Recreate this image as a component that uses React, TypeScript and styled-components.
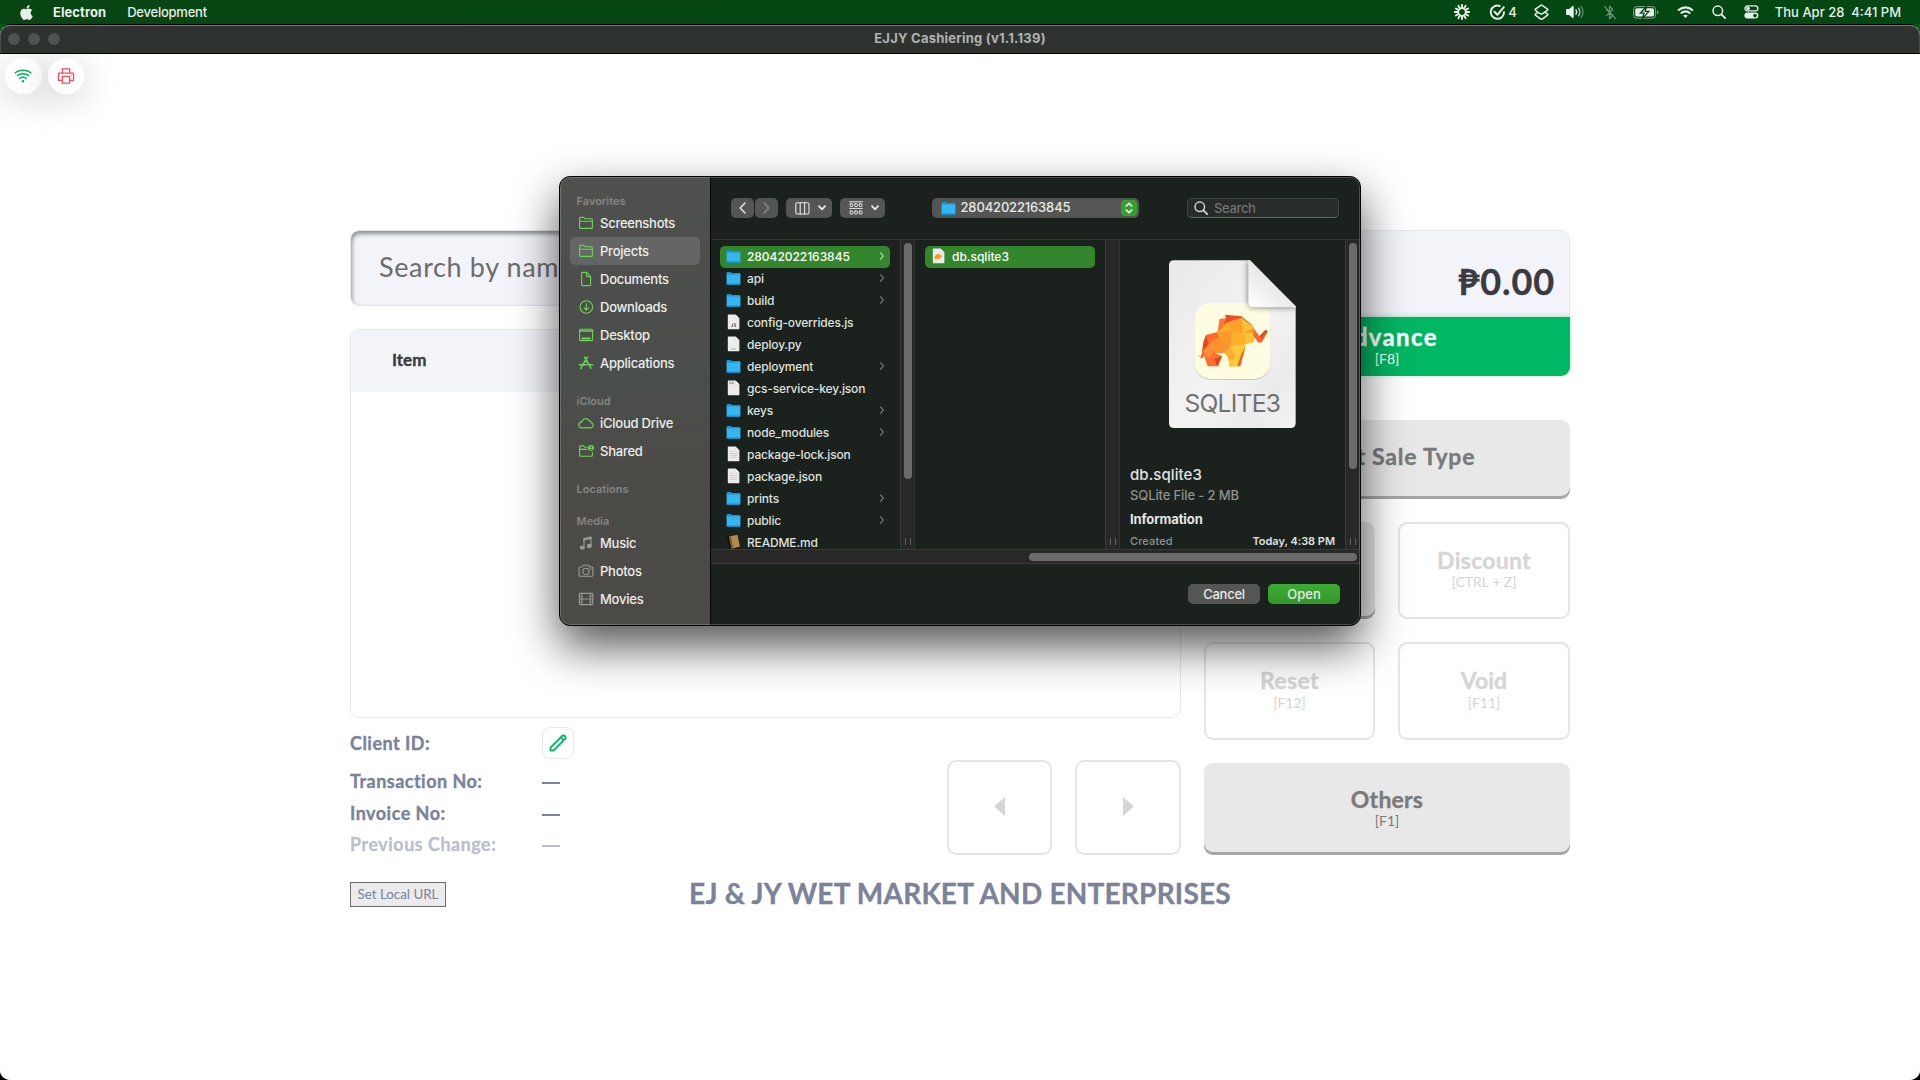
import React from "react";
import styled, { createGlobalStyle, css } from "styled-components";
import { FaApple } from "react-icons/fa";
import { AiOutlineWifi, AiOutlinePrinter } from "react-icons/ai";

const GlobalStyle = createGlobalStyle`
  * { box-sizing: border-box; }
  html, body { margin: 0; padding: 0; background: #000; }
  button { font: inherit; margin: 0; }
`;

const system = css`font-family: Inter, "Liberation Sans", sans-serif;`;
const rounded = css`font-family: Lato, "Open Sans", sans-serif;`;
const heavy = css`font-weight: 700; -webkit-text-stroke: 0.35px currentColor;`;

/* ---------- desktop shell ---------- */

const Desktop = styled.div`
  ${system}
  position: relative;
  width: 1920px;
  height: 1080px;
  overflow: hidden;
  display: flex;
  flex-direction: column;
  background: linear-gradient(#005c12 0, #005c12 60px, #000 61px);
`;

const MenuBar = styled.header`
  height: 24px;
  flex: none;
  display: flex;
  align-items: center;
  justify-content: space-between;
  padding: 0 19px 0 18px;
  background: linear-gradient(90deg, #084513, #034712 60%);
  color: #e8eee9;
  font-size: 13px;
`;

const MenuGroup = styled.div`
  display: flex;
  align-items: center;
  height: 23px;
`;

const MenuLabel = styled.span<{ $left: number; $bold?: boolean; $ls?: number }>`
  margin-left: ${p => p.$left}px;
  font-weight: ${p => (p.$bold ? 700 : 500)};
  letter-spacing: ${p => p.$ls ?? 0}px;
  white-space: pre;
`;

const StatusIcon = styled.span<{ $left: number; $dim?: boolean }>`
  display: flex;
  margin-left: ${p => p.$left}px;
  opacity: ${p => (p.$dim ? 0.45 : 1)};
`;

const Window = styled.main`
  flex: 1;
  min-height: 0;
  display: flex;
  flex-direction: column;
  border-top: 1px solid #000;
  border-radius: 10px;
  overflow: hidden;
  background: #fff;
`;

const TitleBar = styled.div`
  position: relative;
  height: 29px;
  flex: none;
  display: flex;
  align-items: center;
  gap: 8px;
  padding: 0 8px;
  background: #2f332f;
  border-bottom: 1px solid #000;
  box-shadow: inset 0 1px 0 #737673, inset 1px 0 0 #4c504c, inset -1px 0 0 #4c504c;
  border-radius: 10px 10px 0 0;
`;

const Light = styled.span`
  width: 12px;
  height: 12px;
  border-radius: 50%;
  background: #4e534f;
`;

const WindowTitle = styled.h1`
  flex: 1;
  margin: 0 60px 2px 0;
  text-align: center;
  font-size: 13px;
  font-weight: 700;
  letter-spacing: 0.24px;
  color: #b1b3b1;
`;

/* ---------- cashiering page ---------- */

const Page = styled.div`
  ${rounded}
  flex: 1;
  min-height: 0;
  display: flex;
  flex-direction: column;
  align-items: center;
  background: #fff;
`;

const Badges = styled.div`
  align-self: stretch;
  display: flex;
  gap: 6px;
  height: 176px;
  padding: 4px 5px;
`;

const Badge = styled.span<{ $color: string }>`
  display: flex;
  align-items: center;
  justify-content: center;
  width: 36.5px;
  height: 36px;
  border-radius: 50%;
  background: #fff;
  color: ${p => p.$color};
  box-shadow: 0 6px 38px rgba(0, 0, 0, 0.21);
`;

const Board = styled.div`
  width: 1220px;
  display: flex;
  justify-content: space-between;
`;

const LeftColumn = styled.section`
  width: 831px;
  display: flex;
  flex-direction: column;
`;

const SearchBox = styled.div`
  height: 76px;
  display: flex;
  align-items: center;
  padding: 0 28px 4px;
  border: 1px solid #e4e5e9;
  border-radius: 9px;
  background: #f3f4f9;
  box-shadow: inset 1px 3px 4px rgba(0, 0, 0, 0.42);
  font-size: 27px;
  letter-spacing: 0.63px;
  color: #6c6c6c;
`;

const ItemTable = styled.div`
  height: 389px;
  margin-top: 23px;
  border: 1px solid #e8e8e8;
  border-radius: 9px;
  overflow: hidden;
`;

const TableHead = styled.div`
  height: 62px;
  display: flex;
  align-items: center;
  padding: 0 41px 3px;
  background: #f3f4f9;
  font-size: 17px;
  ${heavy}
  color: #3a3a40;
`;

const Summary = styled.div`
  display: flex;
  justify-content: space-between;
  height: 141px;
`;

const Details = styled.div`
  padding-top: 9px;
  font-size: 18px;
  color: #7b8299;
`;

const DetailRow = styled.div<{ $height: number; $after?: number; $faded?: boolean }>`
  display: flex;
  align-items: center;
  height: ${p => p.$height}px;
  margin-bottom: ${p => p.$after ?? 0}px;
  opacity: ${p => (p.$faded ? 0.5 : 1)};
`;

const DetailLabel = styled.span`
  width: 192px;
  ${heavy}
  letter-spacing: 0.48px;
`;

const Dash = styled.span`
  width: 18px;
  height: 2px;
  margin-top: 4px;
  background: currentColor;
`;

const EditButton = styled.button`
  display: flex;
  align-items: center;
  justify-content: center;
  width: 32px;
  height: 32px;
  padding: 0 1px 0 0;
  border: 1px solid #e8e8e8;
  border-radius: 8px;
  background: #fff;
  color: #00b763;
`;

const Pager = styled.div`
  display: flex;
  gap: 23px;
  padding-top: 42px;
`;

const PagerButton = styled.button<{ $width: number }>`
  display: flex;
  align-items: center;
  justify-content: center;
  width: ${p => p.$width}px;
  height: 95px;
  padding: 0 0 2px;
  border: 2px solid #e5e5e5;
  border-radius: 9px;
  background: #fff;
  color: #d5d5d5;
`;

const RightColumn = styled.section`
  width: 366px;
  display: flex;
  flex-direction: column;
`;

const Total = styled.div`
  height: 87px;
  display: flex;
  align-items: center;
  justify-content: flex-end;
  padding: 13px 14px 0;
  border: 1px solid #e8e8e8;
  border-bottom: 0;
  border-radius: 9px 9px 0 0;
  background: #f3f4f9;
  font-size: 36px;
  ${heavy}
  letter-spacing: 0.9px;
  color: #3a3a40;
`;

const KeyGrid = styled.div`
  display: grid;
  grid-template-columns: 171px 1fr;
  gap: 23px;
  margin: 23px 0;
`;

type Look = "advance" | "solid" | "outline";
const looks = {
  advance: css`
    background: #00b763; color: #fff; border-radius: 0 0 9px 9px;
    box-shadow: 0 -1px 5px rgba(0, 183, 99, 0.3);
  `,
  solid: css`
    background: #e8e8e8; color: #7a7a7a; border-radius: 9px;
    box-shadow: inset 0 -3px 0 #a6a6a6;
  `,
  outline: css`background: #fff; color: #d5d5d5; border-radius: 9px; border: 2px solid #e5e5e5;`,
};

const KeyButton = styled.button<{ $look: Look; $height: number; $top?: number; $lift?: number }>`
  display: flex;
  flex-direction: column;
  align-items: center;
  justify-content: center;
  width: 100%;
  height: ${p => p.$height}px;
  margin-top: ${p => p.$top ?? 0}px;
  padding: 0 0 ${p => p.$lift ?? 0}px;
  border: 0;
  ${p => looks[p.$look]}
`;

const KeyTitle = styled.span<{ $size?: number; $ls?: number }>`
  font-size: ${p => p.$size ?? 23}px;
  line-height: 26px;
  ${heavy}
  letter-spacing: ${p => p.$ls ?? 0.4}px;
`;

const KeyHint = styled.span<{ $gap?: number }>`
  margin-top: ${p => p.$gap ?? 0}px;
  font-size: 14px;
  line-height: 17px;
`;

const Footer = styled.footer`
  width: 1220px;
  display: grid;
  grid-template-columns: 1fr auto 1fr;
  align-items: start;
  padding-top: 23px;
`;

const LocalUrl = styled.button`
  justify-self: start;
  width: 96px;
  height: 25px;
  padding: 0 0 2px;
  border: 1px solid #6b6b6b;
  background: #ebebeb;
  color: #7b8299;
  font-size: 13.33px;
  line-height: 20px;
`;

const Company = styled.h2`
  margin: -1px 0 0;
  font-size: 28px;
  line-height: 24px;
  ${heavy}
  letter-spacing: 0.22px;
  color: #7b8299;
`;

/* ---------- open-file dialog ---------- */

const Dialog = styled.div`
  position: absolute;
  left: 559px;
  top: 176px;
  width: 802px;
  height: 450px;
  display: flex;
  border: 1px solid #050505;
  border-radius: 11px;
  overflow: hidden;
  background: #1b211d;
  box-shadow: 0 20px 46px rgba(0, 0, 0, 0.68);
  &::after {
    content: "";
    position: absolute;
    inset: 0;
    border: 1px solid rgba(255, 255, 255, 0.2);
    border-radius: 10px;
    pointer-events: none;
  }
`;

const Sidebar = styled.aside`
  width: 151px;
  flex: none;
  padding: 0 10px;
  border-right: 1px solid #000;
  background: linear-gradient(#50514e, #4c4e4c 30%, #4a4e4b 48%, #4d4b47 65%, #4c4a46);
`;

const SideHeading = styled.h3`
  margin: 15px 0 0;
  padding: 1px 0 0 6.5px;
  height: 17px;
  line-height: 17px;
  font-size: 11px;
  font-weight: 600;
  color: #848684;
`;

const SideItem = styled.div<{ $active?: boolean; $muted?: boolean }>`
  display: flex;
  align-items: center;
  height: 28px;
  padding-left: 8px;
  border-radius: 5px;
  background: ${p => (p.$active ? "#636664" : "transparent")};
  color: #eceeec;
  font-size: 13px;
  font-weight: 500;
  letter-spacing: -0.24px;
  white-space: nowrap;
  svg { width: 16px; height: 16px; margin-right: 6px; flex: none; color: ${p => (p.$muted ? "#9a9b99" : "#6fd456")}; }
`;

const Browser = styled.section`
  flex: 1;
  min-width: 0;
  display: flex;
  flex-direction: column;
`;

const Toolbar = styled.div`
  height: 63px;
  flex: none;
  display: flex;
  align-items: flex-start;
  padding: 21px 21px 0 20px;
  border-bottom: 1px solid #343936;
`;

const ToolButton = styled.button<{ $width: number; $left?: number; $dim?: boolean }>`
  display: flex;
  align-items: center;
  justify-content: center;
  width: ${p => p.$width}px;
  height: 20px;
  margin-left: ${p => p.$left ?? 0}px;
  padding: 0;
  gap: 8px;
  border: 0;
  border-radius: 5px;
  background: #535653;
  color: ${p => (p.$dim ? "#868986" : "#e6e8e6")};
`;

const ViewButton = styled(ToolButton)`
  padding-left: 3px;
`;

const PathPicker = styled.div`
  display: flex;
  align-items: center;
  width: 207px;
  height: 20px;
  margin-left: 47px;
  padding: 0 1px 0 9px;
  border-radius: 5px;
  background: #535653;
  color: #e6e8e6;
  font-size: 13px;
  font-weight: 500;
  letter-spacing: -0.15px;
  span { flex: 1; margin: -2px 0 0 4.5px; }
`;

const Stepper = styled.i`
  display: flex;
  align-items: center;
  justify-content: center;
  width: 16px;
  height: 16px;
  margin-right: 1px;
  border-radius: 4px;
  background: #36a02f;
  color: #fff;
`;

const SearchField = styled.div`
  display: flex;
  align-items: center;
  width: 152px;
  height: 20px;
  margin-left: auto;
  padding-left: 6px;
  gap: 6px;
  border: 1px solid #404542;
  border-bottom-color: #646864;
  border-radius: 5px;
  background: #272c29;
  color: #717471;
  font-size: 13px;
  font-weight: 500;
  letter-spacing: -0.35px;
  svg { color: #d0d2d0; }
`;

const Columns = styled.div`
  display: flex;
  height: 309px;
  overflow: hidden;
`;

const FileColumn = styled.div<{ $width: number; $inset: number }>`
  width: ${p => p.$width}px;
  flex: none;
  padding: 6px 0 0 ${p => p.$inset}px;
`;

const FileRow = styled.div<{ $active?: boolean; $ls?: number }>`
  display: flex;
  align-items: center;
  width: 170px;
  height: 22px;
  padding: 0 6px 2px;
  border-radius: 5px;
  background: ${p => (p.$active ? "#33862b" : "transparent")};
  color: ${p => (p.$active ? "#fff" : "#dfe1df")};
  font-size: 12px;
  font-weight: 500;
  letter-spacing: ${p => p.$ls ?? -0.16}px;
  white-space: nowrap;
  span { flex: 1; margin-left: 6px; }
`;

const Chevron = styled.svg<{ $bright?: boolean }>`
  width: 4px;
  height: 8px;
  color: ${p => (p.$bright ? "#cfe3cd" : "#868986")};
`;

const Track = styled.div`
  width: 15px;
  flex: none;
  display: flex;
  flex-direction: column;
  align-items: center;
  justify-content: space-between;
  padding: 3px 0 4px;
  border-left: 1px solid #3a3c3a;
  border-right: 1px solid #303330;
  background: #272827;
`;

const Thumb = styled.div<{ $height: number }>`
  width: 8px;
  height: ${p => p.$height}px;
  border-radius: 4px;
  background: #6b6b6b;
`;

const Grip = styled.div`
  width: 6px;
  height: 7px;
  border: solid #5e605e;
  border-width: 0 1px;
`;

const BottomTrack = styled.div`
  height: 15px;
  flex: none;
  display: flex;
  justify-content: flex-end;
  align-items: center;
  padding-right: 3px;
  border-top: 1px solid #3a3c3a;
  border-bottom: 1px solid #3a3c3a;
  background: #272827;
`;

const BottomThumb = styled.div`
  width: 328px;
  height: 8px;
  border-radius: 4px;
  background: #6b6b6b;
`;

const Preview = styled.div`
  width: 225px;
  flex: none;
  display: flex;
  flex-direction: column;
  padding: 18px 10px 0;
`;

const DocumentArt = styled.svg`
  width: 131px;
  height: 172px;
  margin-left: 37px;
  flex: none;
`;

const PreviewName = styled.div`
  margin-top: 35px;
  line-height: 20px;
  height: 21px;
  font-size: 15px;
  font-weight: 500;
  letter-spacing: 0.08px;
  color: #e1e3e1;
`;

const PreviewKind = styled.div`
  height: 24px;
  flex: none;
  line-height: 20px;
  font-size: 13px;
  font-weight: 500;
  letter-spacing: -0.12px;
  color: #8f928f;
`;

const PreviewHeading = styled.div`
  height: 20px;
  flex: none;
  line-height: 20px;
  font-size: 13px;
  font-weight: 700;
  letter-spacing: -0.1px;
  color: #e4e6e4;
`;

const PreviewFact = styled.div`
  flex: none;
  display: flex;
  justify-content: space-between;
  margin-top: 2px;
  line-height: 20px;
  font-size: 11px;
  font-weight: 500;
  color: #8f928f;
  letter-spacing: 0.12px;
  b { font-weight: 600; letter-spacing: -0.04px; color: #dfe1df; }
`;

const Actions = styled.div`
  display: flex;
  justify-content: flex-end;
  gap: 8px;
  padding: 20px 20px 0 0;
`;

const ActionButton = styled.button<{ $primary?: boolean }>`
  width: 72px;
  height: 20px;
  padding: 0;
  border: 0;
  border-radius: 5px;
  background: ${p => (p.$primary ? "linear-gradient(#3dab34, #329929)" : "#535653")};
  color: #e8eae8;
  font-size: 13px;
  line-height: 20px;
  font-weight: 500;
  letter-spacing: ${p => (p.$primary ? 0 : -0.25)}px;
`;

/* ---------- small drawings ---------- */

const line = { fill: "none", stroke: "currentColor", strokeWidth: 1.1, strokeLinecap: "round", strokeLinejoin: "round" } as const;

const sideIcons: Record<string, React.ReactNode> = {
  folder: <path d="M1.6 12.4V3.4q0-1 1-1h3l1.3 1.3h6.5q1 0 1 1v7.7q0 1-1 1H2.6q-1 0-1-1zM1.6 6.3h12.8" />,
  doc: <path d="M3.6 2.4q0-1 1-1h4l4 4.2v8q0 1-1 1h-7q-1 0-1-1zM8.4 1.6v3.2q0 .9.9.9h3.2" />,
  down: <><circle cx="8.3" cy="8" r="6.3" /><path d="M8.3 4.8v6M6 8.8l2.3 2.3 2.3-2.3" /></>,
  desktop: <><rect x="1.6" y="2.2" width="13" height="11.4" rx="1" /><path d="M1.6 4h13" strokeWidth="1.6" /><path d="M4.4 11.4h7.4" strokeWidth="2" /></>,
  apps: <path strokeWidth="1.6" d="M6.6 2.2L12.9 13.2M9.4 2.2L4 11.2M3.2 12.6l-.5.9M1.6 9.8h7.2M11.4 9.8h3.2" />,
  cloud: <path d="M4 12.9h8.6a2.7 2.7 0 0 0 .6-5.3 2.3 2.3 0 0 0-2.2-2A3.9 3.9 0 0 0 3.8 6.9 3 3 0 0 0 4 12.9z" />,
  shared: <><path d="M9 4.2H6.9L5.6 2.9H2.6q-1 0-1 1v8.3q0 1 1 1h10.8q1 0 1-1V9.6M1.6 6.4H9" /><circle cx="13" cy="5" r="3" fill="currentColor" stroke="none" /><circle cx="13" cy="4.1" r=".9" fill="#4c4d4a" stroke="none" /><path d="M11.6 6.7q1.4-1.2 2.8 0" stroke="#4c4d4a" strokeWidth="1" /></>,
  music: <><path d="M6 12V3.6l7-1.6v8.4" /><path d="M6 4.6l7-1.6" strokeWidth="2" /><ellipse cx="4.3" cy="12.6" rx="2" ry="1.6" fill="currentColor" /><ellipse cx="11.3" cy="11" rx="2" ry="1.6" fill="currentColor" /></>,
  photo: <><path d="M2 13.2q-.9 0-.9-1V5q0-1 .9-1h2.2l1.2-1.7h5.2L11.8 4H14q.9 0 .9 1v7.2q0 1-.9 1z" /><circle cx="8" cy="8.4" r="3.1" /><path d="M12.6 5.9h.4" /></>,
  film: <><rect x="1.4" y="2.4" width="13.4" height="11.2" rx=".8" /><path d="M4 2.4v11.2M12.2 2.4v11.2M4 8h8.2M1.4 5.2H4M1.4 8H4M1.4 10.8H4M12.2 5.2h2.6M12.2 8h2.6M12.2 10.8h2.6" strokeWidth=".9" /></>,
};

const SideIcon = ({ name }: { name: string }) => <svg viewBox="0 0 16 16" {...line}>{sideIcons[name]}</svg>;

const FolderIcon = () => (
  <svg width="15" height="15" viewBox="0 0 15 15">
    <path d="M.6 1.8q0-.8.8-.8h3.4l1.1 1h7.6q.9 0 .9.8V5H.6z" fill="#1a93d2" />
    <path d="M.6 3.6h13.8v9.3q0 .9-.8.9H1.4q-.8 0-.8-.9z" fill="#35b5f1" />
    <path d="M.6 12.4h13.8v.6q0 .8-.8.8H1.4q-.8 0-.8-.8z" fill="#118ccb" />
  </svg>
);

const FileIcon = ({ kind }: { kind: string }) => (
  <svg width="15" height="16" viewBox="0 0 15 16">
    {kind === "book" ? (
      <><path d="M.8 2.6L3.4 2l2.4 11.6-2 1.2z" fill="#17110a" /><path d="M3 2.4L11.4.8 14 12.4l-8.3 2.4z" fill="#b48a4f" /><path d="M3 2.4l1.8-.4 2.6 12.2-1.7.6z" fill="#7d5a2c" /></>
    ) : (
      <>
        <path d="M1.8 1.2q0-.6.6-.6h7l4 4v10q0 .7-.6.7H2.4q-.6 0-.6-.7z" fill="#ececec" />
        <path d="M9.4.6l4 4h-4z" fill="#fff" stroke="#bbb" strokeWidth=".4" />
        {kind === "js" && <path d="M6.6 9.6v2.4q0 .8-1.4.6M10 9.9q-2-.5-1.8.6 0 .5 1 .7t.9.8q-.3.8-2 .3" fill="none" stroke="#555" strokeWidth=".9" />}
        {kind === "text" && <path d="M3.6 5.4h4M3.6 7.4h8M3.6 9.4h8M3.6 11.4h8" stroke="#c4c4c4" strokeWidth=".7" />}
        {kind === "py" && <path d="M5 13h5" stroke="#aaa" strokeWidth=".9" />}
        {kind === "key" && <path d="M3 2.2h5M3 3.6h5" stroke="#999" strokeWidth=".8" />}
        {kind === "db" && <path d="M3.6 11V8.4L6 6l3 .2 1 1.6 1.8-.5-1.2 2L9 9.6 8.6 11H7l-.6-1L5.8 11z" fill="#f9962c" />}
      </>
    )}
  </svg>
);

const Down = () => <svg width="8" height="6" viewBox="0 0 8 6" {...line} strokeWidth={1.8}><path d="M1 1.2l3 3.2 3-3.2" /></svg>;

const shade = (points: string, fill: string) => <polygon points={points} fill={fill} />;

const SqliteDocument = () => (
  <DocumentArt viewBox="323 263 393 516">
    <defs>
      <linearGradient id="paper" x1="0" y1="0" x2="1" y2="1"><stop offset="0" stopColor="#e9e9ea" /><stop offset=".55" stopColor="#f3f3f4" /><stop offset=".8" stopColor="#ebebec" /><stop offset="1" stopColor="#f2f2f3" /></linearGradient>
      <linearGradient id="curl" x1="0" y1="1" x2=".55" y2=".4"><stop offset="0" stopColor="#fff" /><stop offset="1" stopColor="#e6e6e7" /></linearGradient>
      <clipPath id="sheet"><path d="M329 285q0-15 15-15h228l137 138v350q0 15-15 15H344q-15 0-15-15z" /></clipPath>
      <filter id="soft" x="-30%" y="-30%" width="160%" height="160%"><feGaussianBlur stdDeviation="9" /></filter>
    </defs>
    <path d="M329 285q0-15 15-15h228l137 138v350q0 15-15 15H344q-15 0-15-15z" fill="url(#paper)" />
    <g clipPath="url(#sheet)">
      <rect x="405" y="401" width="228" height="228" rx="50" fill="#c9c9bb" />
      <rect x="405" y="398" width="228" height="228" rx="50" fill="#fefde1" />
      {shade("413,553 424,560 430,543 438,548 428,565", "#f1592a")}
      {shade("440,494 474,485 486,478 484,512 456,522 428,548", "#fb6a2e")}
      {shade("440,494 448,520 428,548 432,515", "#e9481f")}
      {shade("428,546 456,514 480,500 514,528 497,548 464,548", "#fc922f")}
      {shade("430,545 464,546 488,558 477,588 445,588", "#ff6d31")}
      {shade("466,566 488,557 473,588", "#df431d")}
      {shade("430,545 464,546 450,566", "#ff8a3d")}
      {shade("482,482 481,446 500,444 497,433 546,438 585,470 546,448 505,458", "#ec4d24")}
      {shade("481,446 500,446 490,474 474,487", "#ff7632")}
      {shade("474,487 500,458 546,442 584,472 584,515 560,521 514,531 480,502", "#fcb02b")}
      {shade("500,458 546,442 552,488 520,480", "#faa129")}
      {shade("546,442 584,472 584,515 560,519 552,488", "#ffc136")}
      {shade("552,488 584,473 584,487", "#f79a28")}
      {shade("474,487 520,480 514,531 480,502", "#fb9a2c")}
      {shade("583,474 600,498 619,478 625,484 608,515 597,517 582,497", "#f8672b")}
      {shade("600,498 619,478 625,484 606,506", "#e24a20")}
      {shade("497,548 514,531 560,520 553,548 540,588 510,590 506,560", "#ffc73a")}
      {shade("497,548 514,531 530,560 512,572", "#fdad2d")}
      {shade("558,528 553,550 543,588 534,588 546,552", "#f0601f")}
      <path d="M567 262v132q0 17 17 17h132z" fill="#000" opacity=".55" filter="url(#soft)" />
    </g>
    <path d="M567 270h5l137 138v3H582q-15 0-15-15z" fill="url(#curl)" />
    <text x="519" y="726" textAnchor="middle" fontFamily="Inter, Liberation Sans, sans-serif" fontSize="74" letterSpacing="-2.4" fill="#707070">SQLITE3</text>
  </DocumentArt>
);

const spokes = Array.from({ length: 12 }, (_, i) => i * 30);

const BurstIcon = () => (
  <svg width="16" height="16" viewBox="0 0 16 16" stroke="currentColor" strokeWidth="1.9" strokeLinecap="round">
    {spokes.map(a => <path key={a} d="M8 .9v3.4" transform={`rotate(${a} 8 8)`} />)}
    <circle cx="8" cy="8" r="4" fill="none" strokeWidth="1.4" />
  </svg>
);
const CheckIcon = () => <svg width="17" height="17" viewBox="0 0 17 17" {...line} strokeWidth={2}><path d="M10.6 2A6.6 6.6 0 1 0 15 8.2" /><path d="M5.4 7.8l3 3 6.4-7.6" /></svg>;
const LayersIcon = () => <svg width="15" height="17" viewBox="0 0 15 17" {...line} strokeWidth={1.5}><path d="M3.8 8.3L1.4 6.1q-.5-.5 0-1L6.8 1.3q.7-.4 1.4 0l5.4 3.8q.5.5 0 1L8.2 9.8q-.7.4-1.4 0zM3.6 8.5l-2.2 1.6q-.5.5 0 1l5.4 4q.7.4 1.4 0l5.4-4q.5-.5 0-1l-2.2-1.6" /></svg>;
const SpeakerIcon = () => <svg width="19" height="14" viewBox="0 0 19 14" {...line} strokeWidth={1.4}><path d="M.8 4.8h2.5L7 1.6v10.8L3.3 9.2H.8z" fill="currentColor" /><path d="M10 4.8q1.4 2.2 0 4.4" /><path d="M12.6 3.2q2.5 3.8 0 7.6" opacity=".75" /><path d="M15.2 1.6q3.6 5.4 0 10.8" opacity=".4" /></svg>;
const BluetoothIcon = () => <svg width="12" height="15" viewBox="0 0 12 15" {...line} strokeWidth={1.3}><path d="M2.4 10.6L8.8 4.6 5.6 1.2v12.4l3.2-3-6.4-6" /><path d="M.8 1.6l10.6 12" /></svg>;
const BatteryIcon = () => (
  <svg width="26" height="13" viewBox="0 0 26 13">
    <rect x=".6" y=".6" width="22" height="11.6" rx="3.2" fill="none" stroke="currentColor" strokeOpacity=".55" strokeWidth="1" />
    <rect x="2.2" y="2.2" width="18.8" height="8.4" rx="1.8" fill="currentColor" />
    <path d="M24 4.6q1.5.6 1.5 1.8T24 8.2z" fill="currentColor" opacity=".55" />
    <path d="M13.6.2L7.4 7.2h3.6L9.4 12.6l6.4-7.2h-3.6z" fill="currentColor" stroke="#034712" strokeWidth="1.3" />
  </svg>
);
const WifiIcon = () => <svg width="17" height="13" viewBox="0 0 17 13" {...line} strokeWidth={2} strokeLinecap="butt"><path d="M1 4.6q7.5-6.4 15 0M3.7 7.4q4.8-4 9.6 0" /><path d="M6.1 9.6q2.4-1.8 4.8 0L8.5 12z" fill="currentColor" stroke="none" /></svg>;
const SearchIcon = ({ size = 14 }: { size?: number }) => <svg width={size} height={size} viewBox="0 0 14 14" {...line} strokeWidth={1.5}><circle cx="5.8" cy="5.8" r="4.8" /><path d="M9.4 9.4l3.8 3.8" strokeWidth="1.8" /></svg>;
const ControlIcon = () => (
  <svg width="15" height="14" viewBox="0 0 15 14">
    <rect x="1" y=".9" width="12.8" height="5" rx="2.5" fill="none" stroke="currentColor" strokeWidth="1.3" />
    <circle cx="4" cy="3.4" r="1.8" fill="currentColor" />
    <rect x=".4" y="7.6" width="14" height="6" rx="3" fill="currentColor" />
    <circle cx="11" cy="10.6" r="1.8" fill="#034712" />
  </svg>
);

/* ---------- data ---------- */

const sections = [
  { title: "Favorites", items: [["Screenshots", "folder"], ["Projects", "folder"], ["Documents", "doc"], ["Downloads", "down"], ["Desktop", "desktop"], ["Applications", "apps"]] },
  { title: "iCloud", items: [["iCloud Drive", "cloud"], ["Shared", "shared"]] },
  { title: "Locations", items: [] },
  { title: "Media", muted: true, items: [["Music", "music"], ["Photos", "photo"], ["Movies", "film"]] },
];

const files: [string, string][] = [
  ["28042022163845", "folder"], ["api", "folder"], ["build", "folder"], ["config-overrides.js", "js"], ["deploy.py", "py"],
  ["deployment", "folder"], ["gcs-service-key.json", "key"], ["keys", "folder"], ["node_modules", "folder"],
  ["package-lock.json", "text"], ["package.json", "text"], ["prints", "folder"], ["public", "folder"], ["README.md", "book"],
];

const FileDialog = () => (
  <Dialog role="dialog">
    <Sidebar>
      {sections.map(s => (
        <React.Fragment key={s.title}>
          <SideHeading>{s.title}</SideHeading>
          {s.items.map(([label, icon]) => (
            <SideItem key={label} $active={label === "Projects"} $muted={s.muted}><SideIcon name={icon} />{label}</SideItem>
          ))}
        </React.Fragment>
      ))}
    </Sidebar>
    <Browser>
      <Toolbar>
        <ToolButton $width={23}><svg width="7" height="12" viewBox="0 0 7 12" {...line} strokeWidth={1.4}><path d="M6 1L1.2 6 6 11" /></svg></ToolButton>
        <ToolButton $width={23} $left={1} $dim><svg width="7" height="12" viewBox="0 0 7 12" {...line} strokeWidth={1.4}><path d="M1 1l4.8 5L1 11" /></svg></ToolButton>
        <ViewButton $width={46} $left={8}>
          <svg width="15" height="13" viewBox="0 0 15 13" {...line}><rect x=".8" y=".8" width="13.2" height="11.2" rx="1.4" /><path d="M5.2 1v11M9.6 1v11" /></svg>
          <Down />
        </ViewButton>
        <ViewButton $width={45} $left={8}>
          <svg width="14" height="14" viewBox="0 0 14 14" {...line} strokeWidth={1}>
            <path d="M.6.8h12.8M.6 7.4h12.8" />
            {[1, 5.6, 10.2].map(x => <React.Fragment key={x}><rect x={x} y="2.8" width="2.8" height="2.6" rx=".6" /><rect x={x} y="10" width="2.8" height="3" rx=".6" /></React.Fragment>)}
          </svg>
          <Down />
        </ViewButton>
        <PathPicker>
          <FolderIcon /><span>28042022163845</span>
          <Stepper><svg width="8" height="12" viewBox="0 0 8 12" {...line} strokeWidth={1.6}><path d="M1.2 4L4 1.4 6.8 4M1.2 8L4 10.6 6.8 8" /></svg></Stepper>
        </PathPicker>
        <SearchField><SearchIcon />Search</SearchField>
      </Toolbar>
      <Columns>
        <FileColumn $width={189} $inset={9}>
          {files.map(([name, kind], i) => (
            <FileRow key={name} $active={i === 0} $ls={i === 0 ? -0.04 : undefined}>
              {kind === "folder" ? <FolderIcon /> : <FileIcon kind={kind} />}
              <span>{name}</span>
              {kind === "folder" && <Chevron $bright={i === 0} viewBox="0 0 4 8" {...line}><path d="M.6.8L3.4 4 .6 7.2" /></Chevron>}
            </FileRow>
          ))}
        </FileColumn>
        <Track><Thumb $height={236} /><Grip /></Track>
        <FileColumn $width={190} $inset={10}>
          <FileRow $active $ls={0}><FileIcon kind="db" /><span>db.sqlite3</span></FileRow>
        </FileColumn>
        <Track><span /><Grip /></Track>
        <Preview>
          <SqliteDocument />
          <PreviewName>db.sqlite3</PreviewName>
          <PreviewKind>SQLite File - 2 MB</PreviewKind>
          <PreviewHeading>Information</PreviewHeading>
          <PreviewFact>Created<b>Today, 4:38 PM</b></PreviewFact>
        </Preview>
        <Track><Thumb $height={226} /><Grip /></Track>
      </Columns>
      <BottomTrack><BottomThumb /></BottomTrack>
      <Actions><ActionButton>Cancel</ActionButton><ActionButton $primary>Open</ActionButton></Actions>
    </Browser>
  </Dialog>
);

export default function App() {
  return (
    <Desktop>
      <GlobalStyle />
      <MenuBar>
        <MenuGroup>
          <FaApple size={17} />
          <MenuLabel $left={18} $bold $ls={0.07}>Electron</MenuLabel>
          <MenuLabel $left={21} $ls={-0.23}>Development</MenuLabel>
        </MenuGroup>
        <MenuGroup>
          <StatusIcon $left={0}><BurstIcon /></StatusIcon>
          <StatusIcon $left={19}><CheckIcon /></StatusIcon>
          <MenuLabel $left={2}>4</MenuLabel>
          <StatusIcon $left={17}><LayersIcon /></StatusIcon>
          <StatusIcon $left={17}><SpeakerIcon /></StatusIcon>
          <StatusIcon $left={19} $dim><BluetoothIcon /></StatusIcon>
          <StatusIcon $left={17}><BatteryIcon /></StatusIcon>
          <StatusIcon $left={18}><WifiIcon /></StatusIcon>
          <StatusIcon $left={18}><SearchIcon /></StatusIcon>
          <StatusIcon $left={18}><ControlIcon /></StatusIcon>
          <MenuLabel $left={16}>Thu Apr 28  4:41 PM</MenuLabel>
        </MenuGroup>
      </MenuBar>
      <Window>
        <TitleBar><Light /><Light /><Light /><WindowTitle>EJJY Cashiering (v1.1.139)</WindowTitle></TitleBar>
        <Page>
          <Badges>
            <Badge $color="#00b763"><AiOutlineWifi size={20} /></Badge>
            <Badge $color="#ff4757"><AiOutlinePrinter size={20} /></Badge>
          </Badges>
          <Board>
            <LeftColumn>
              <SearchBox>Search by name</SearchBox>
              <ItemTable><TableHead>Item</TableHead></ItemTable>
              <Summary>
                <Details>
                  <DetailRow $height={32} $after={6}>
                    <DetailLabel>Client ID:</DetailLabel>
                    <EditButton>
                      <svg width="20" height="20" viewBox="0 0 24 24" {...line} strokeWidth={2.2}><path d="M15.232 5.232l3.536 3.536m-2.036-5.036a2.5 2.5 0 113.536 3.536L6.5 21.036H3v-3.572L16.732 3.732z" /></svg>
                    </EditButton>
                  </DetailRow>
                  <DetailRow $height={32}><DetailLabel>Transaction No:</DetailLabel><Dash /></DetailRow>
                  <DetailRow $height={32}><DetailLabel>Invoice No:</DetailLabel><Dash /></DetailRow>
                  <DetailRow $height={30} $faded><DetailLabel>Previous Change:</DetailLabel><Dash /></DetailRow>
                </Details>
                <Pager>
                  <PagerButton $width={105}><svg width="11" height="19" viewBox="0 0 11 19" fill="currentColor"><path d="M11 0v19L0 9.5z" /></svg></PagerButton>
                  <PagerButton $width={106}><svg width="11" height="19" viewBox="0 0 11 19" fill="currentColor"><path d="M0 0v19l11-9.5z" /></svg></PagerButton>
                </Pager>
              </Summary>
            </LeftColumn>
            <RightColumn>
              <Total>₱0.00</Total>
              <KeyButton $look="advance" $height={59} $lift={3}><KeyTitle $size={24} $ls={1.35}>Advance</KeyTitle><KeyHint>[F8]</KeyHint></KeyButton>
              <KeyButton $look="solid" $height={79} $top={44} $lift={7}><KeyTitle $ls={0.75}>Select Sale Type</KeyTitle></KeyButton>
              <KeyGrid>
                <KeyButton $look="solid" $height={97} />
                <KeyButton $look="outline" $height={97} $lift={4}><KeyTitle $ls={0.27}>Discount</KeyTitle><KeyHint>[CTRL + Z]</KeyHint></KeyButton>
                <KeyButton $look="outline" $height={98} $lift={4}><KeyTitle>Reset</KeyTitle><KeyHint $gap={1}>[F12]</KeyHint></KeyButton>
                <KeyButton $look="outline" $height={98} $lift={4}><KeyTitle $ls={0}>Void</KeyTitle><KeyHint $gap={1}>[F11]</KeyHint></KeyButton>
              </KeyGrid>
              <KeyButton $look="solid" $height={92} $lift={3}><KeyTitle $ls={0.22}>Others</KeyTitle><KeyHint>[F1]</KeyHint></KeyButton>
            </RightColumn>
          </Board>
          <Footer>
            <LocalUrl>Set Local URL</LocalUrl>
            <Company>EJ &amp; JY WET MARKET AND ENTERPRISES</Company>
            <span />
          </Footer>
        </Page>
      </Window>
      <FileDialog />
    </Desktop>
  );
}
